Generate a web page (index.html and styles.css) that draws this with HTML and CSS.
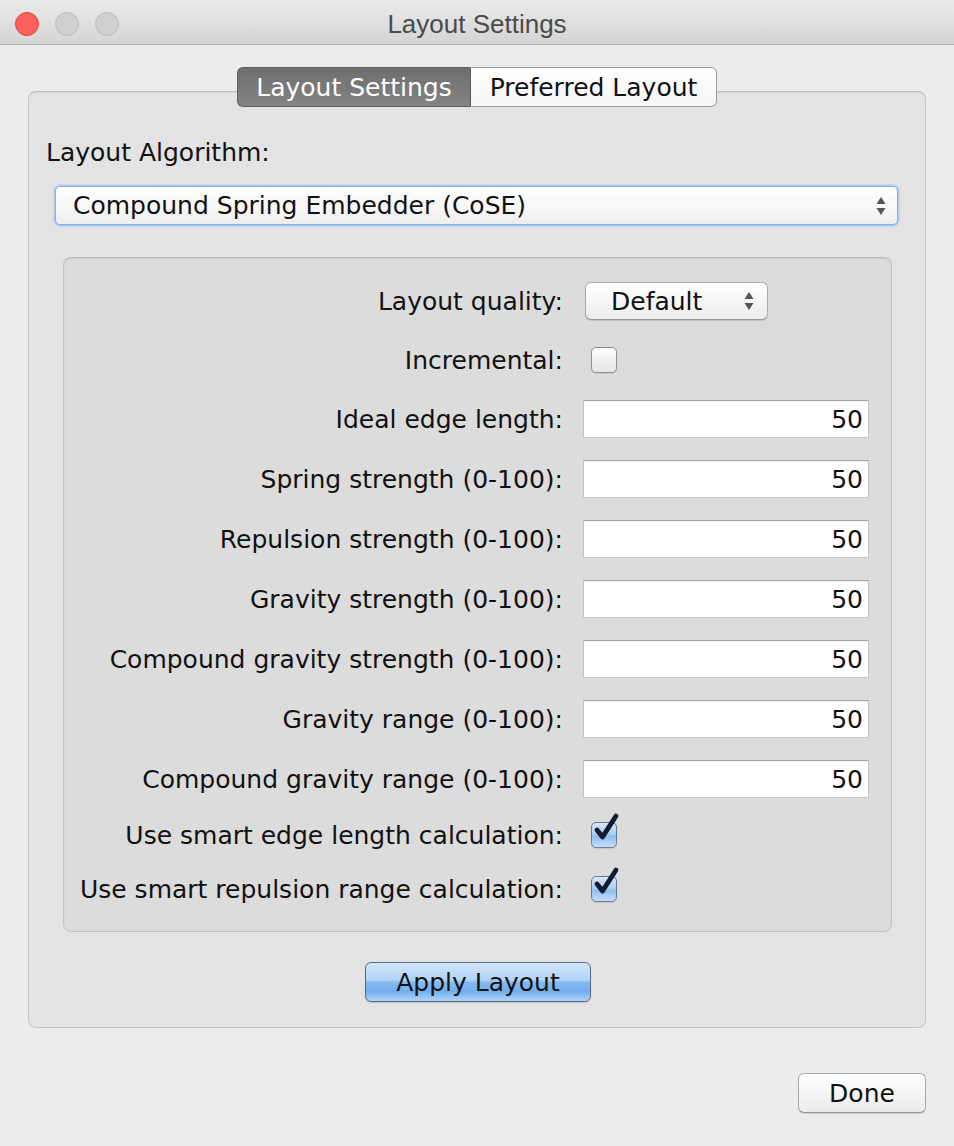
FILE: index.html
```html
<!DOCTYPE html>
<html>
<head>
<meta charset="utf-8">
<link rel="stylesheet" href="styles.css">
</head>
<body>
<div class="window">
  <div class="titlebar">
    <div class="lights">
      <span class="light red"></span>
      <span class="light"></span>
      <span class="light"></span>
    </div>
    <div class="title">Layout Settings</div>
  </div>
  <div class="content">
    <div class="tabs">
      <div class="tab active">Layout Settings</div>
      <div class="tab">Preferred Layout</div>
    </div>
    <div class="tabpanel">
      <div class="algo-label">Layout Algorithm:</div>
      <div class="combo">
        <span>Compound Spring Embedder (CoSE)</span>
        <svg class="arrows" width="12" height="22" viewBox="0 0 12 22"><path d="M6 2 L10.5 9 L1.5 9 Z M6 20 L10.5 13 L1.5 13 Z" fill="#555"/></svg>
      </div>
      <div class="settings">
        <div class="lbl">Layout quality:</div>
        <div class="ctl"><div class="popup"><span>Default</span><svg class="arrows" width="12" height="22" viewBox="0 0 12 22"><path d="M6 2 L10.5 9 L1.5 9 Z M6 20 L10.5 13 L1.5 13 Z" fill="#555"/></svg></div></div>

        <div class="lbl">Incremental:</div>
        <div class="ctl"><div class="check"></div></div>

        <div class="lbl">Ideal edge length:</div>
        <div class="ctl"><div class="field">50</div></div>

        <div class="lbl">Spring strength (0-100):</div>
        <div class="ctl"><div class="field">50</div></div>

        <div class="lbl">Repulsion strength (0-100):</div>
        <div class="ctl"><div class="field">50</div></div>

        <div class="lbl">Gravity strength (0-100):</div>
        <div class="ctl"><div class="field">50</div></div>

        <div class="lbl">Compound gravity strength (0-100):</div>
        <div class="ctl"><div class="field">50</div></div>

        <div class="lbl">Gravity range (0-100):</div>
        <div class="ctl"><div class="field">50</div></div>

        <div class="lbl">Compound gravity range (0-100):</div>
        <div class="ctl"><div class="field">50</div></div>

        <div class="lbl">Use smart edge length calculation:</div>
        <div class="ctl"><div class="check checked"><svg class="tick" width="30" height="32" viewBox="0 0 30 32"><path d="M6 18 L11.5 25 L25 4" fill="none" stroke="#0f1c33" stroke-width="4.8" stroke-linecap="round" stroke-linejoin="round"/></svg></div></div>

        <div class="lbl">Use smart repulsion range calculation:</div>
        <div class="ctl"><div class="check checked"><svg class="tick" width="30" height="32" viewBox="0 0 30 32"><path d="M6 18 L11.5 25 L25 4" fill="none" stroke="#0f1c33" stroke-width="4.8" stroke-linecap="round" stroke-linejoin="round"/></svg></div></div>
      </div>
      <div class="apply-row"><div class="btn apply">Apply Layout</div></div>
    </div>
    <div class="footer"><div class="btn done">Done</div></div>
  </div>
</div>
</body>
</html>
```

FILE: styles.css
```css
* { box-sizing: border-box; }
html, body { margin: 0; padding: 0; }
body {
  width: 954px;
  height: 1146px;
  background: #ececec;
  font-family: "DejaVu Sans", sans-serif;
  font-size: 25px;
  color: #111;
  overflow: hidden;
}
.window {
  width: 954px;
  height: 1146px;
  background: #ececec;
  display: flex;
  flex-direction: column;
}
.titlebar {
  height: 45px;
  padding-top: 4px;
  background: linear-gradient(#ebebeb, #d4d4d4);
  border-bottom: 1px solid #b3b3b3;
  display: flex;
  align-items: center;
  position: relative;
}
.lights {
  display: flex;
  gap: 16px;
  padding-left: 15px;
}
.light {
  width: 24px;
  height: 24px;
  border-radius: 50%;
  background: #d0d0d0;
  border: 1px solid #bdbdbd;
}
.light.red {
  background: #fc605b;
  border-color: #de4640;
}
.title {
  position: absolute;
  left: 0; right: 0; top: 4px; bottom: 0;
  display: flex;
  align-items: center;
  justify-content: center;
  font-family: "Liberation Sans", sans-serif;
  font-size: 26px;
  color: #4b4b4b;
}
.content {
  padding: 22px 28px 0 28px;
  display: flex;
  flex-direction: column;
}
.tabs {
  display: flex;
  justify-content: center;
  position: relative;
  z-index: 2;
  height: 40px;
  margin-bottom: -16px;
}
.tab {
  height: 40px;
  display: flex;
  align-items: center;
  justify-content: center;
  border: 1px solid #9c9c9c;
  background: linear-gradient(#ffffff, #f6f6f6);
  color: #111;
}
.tab:first-child {
  width: 233px;
  border-radius: 6px 0 0 6px;
  border-right: none;
}
.tab:last-child {
  width: 247px;
  border-radius: 0 6px 6px 0;
  border-left: 1px solid #5a5a5a;
}
.tab.active {
  background: linear-gradient(#6e6e6e, #848484);
  border-color: #5f5f5f;
  color: #fff;
}
.tabpanel {
  height: 937px;
  background: #e3e3e3;
  border: 1px solid #c6c6c6;
  border-top-color: #bdbdbd;
  border-radius: 8px;
  box-shadow: inset 0 1px 1px rgba(0,0,0,0.06);
  display: flex;
  flex-direction: column;
  padding-top: 46px;
}
.algo-label {
  margin-left: 17px;
  line-height: 30px;
  height: 30px;
}
.combo {
  margin: 18px 27px 0 26px;
  height: 39px;
  border: 1px solid #80b3ec;
  border-radius: 5px;
  box-shadow: 0 0 0 1.5px #a9cdf5, 0 1px 1px rgba(0,0,0,0.15);
  background: linear-gradient(#ffffff, #f7f7f7 55%, #eeeeee);
  display: flex;
  align-items: center;
  justify-content: space-between;
  padding: 0 10px 0 17px;
}
.settings {
  margin: 32px 33px 0 34px;
  height: 675px;
  background: #dcdcdc;
  border: 1px solid #c3c3c3;
  border-top-color: #b9b9b9;
  border-radius: 8px;
  box-shadow: inset 0 1px 2px rgba(0,0,0,0.08);
  padding-top: 13px;
  display: grid;
  grid-template-columns: 499px 1fr;
  grid-template-rows: 60px 58px repeat(7, 60px) 52px 56px;
  column-gap: 20px;
}
.lbl {
  text-align: right;
  display: flex;
  align-items: center;
  justify-content: flex-end;
  white-space: nowrap;
}
.ctl {
  display: flex;
  align-items: center;
}
.popup {
  margin-left: 2px;
  width: 183px;
  height: 38px;
  border: 1px solid #ababab;
  border-bottom-color: #999;
  border-radius: 6px;
  background: linear-gradient(#ffffff, #f4f4f4 60%, #ececec);
  box-shadow: 0 1px 1px rgba(0,0,0,0.12);
  display: flex;
  align-items: center;
  justify-content: space-between;
  padding: 0 12px 0 25px;
}
.check {
  margin-left: 8px;
  width: 26px;
  height: 26px;
  border: 1px solid #8f8f8f;
  border-radius: 5px;
  background: linear-gradient(#ffffff, #f1f1f1 50%, #e6e6e6);
  box-shadow: 0 1px 1px rgba(0,0,0,0.1);
  position: relative;
}
.check.checked {
  border-color: #6c7b95;
  background: linear-gradient(#d8e8fb, #a9cbf3 50%, #8fbcf0 55%, #c7e0fa);
}
.tick {
  position: absolute;
  left: -1px;
  top: -11px;
}
.field {
  width: 286px;
  height: 38px;
  background: #fff;
  border: 1px solid #c6c6c6;
  border-top-color: #a5a5a5;
  box-shadow: inset 0 1px 1px rgba(0,0,0,0.08);
  display: flex;
  align-items: center;
  justify-content: flex-end;
  padding-right: 5px;
}
.apply-row {
  display: flex;
  justify-content: center;
  margin-top: 30px;
  padding-left: 2px;
}
.btn {
  display: flex;
  align-items: center;
  justify-content: center;
  height: 40px;
  border-radius: 6px;
}
.apply {
  width: 226px;
  border: 1px solid #59698a;
  background: linear-gradient(#d3e5fa, #b3d3f7 45%, #86bbf1 50%, #74adee 75%, #b0d4f9);
  box-shadow: 0 1px 1px rgba(0,0,0,0.15);
}
.footer {
  display: flex;
  justify-content: flex-end;
  margin-top: 45px;
}
.done {
  width: 128px;
  border: 1px solid #a9a9a9;
  border-bottom-color: #959595;
  background: linear-gradient(#ffffff, #f3f3f3 60%, #ebebeb);
  box-shadow: 0 1px 1px rgba(0,0,0,0.12);
}
```
